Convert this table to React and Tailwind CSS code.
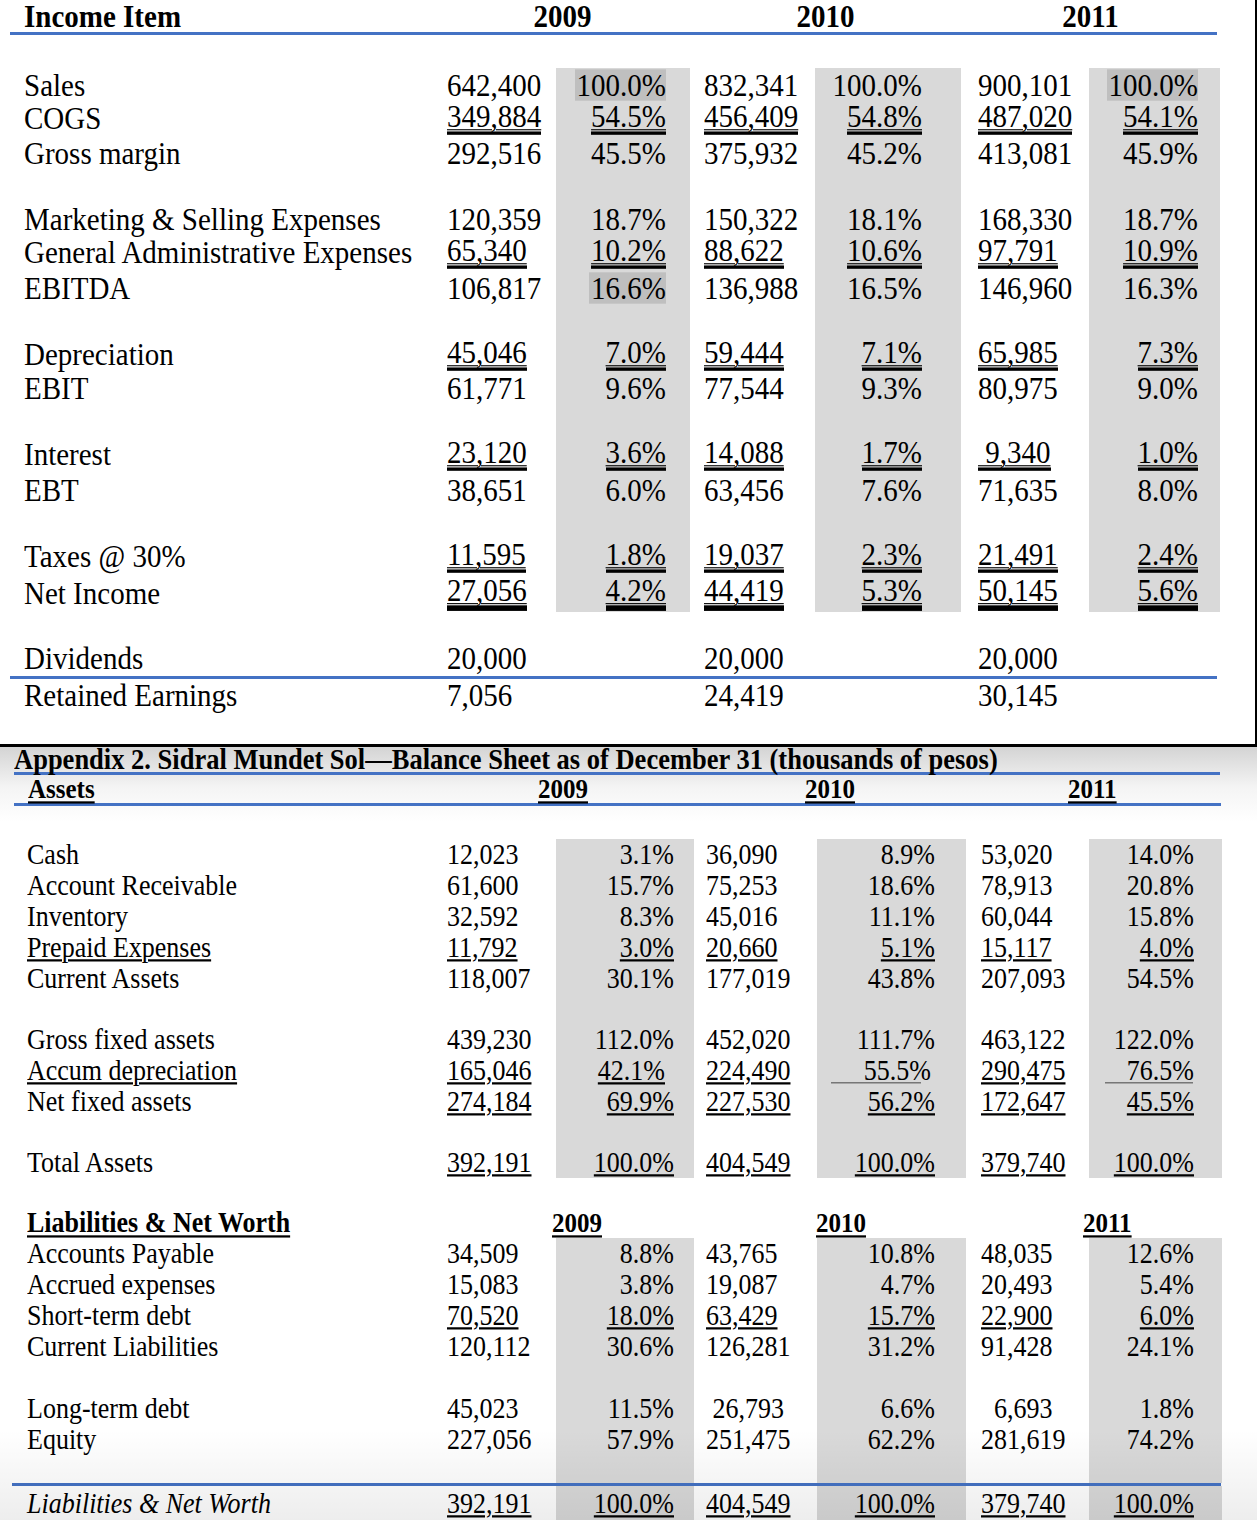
import React from "react";

const TG = "grid grid-cols-[447px_109px_134px_125px_146px_128px_131px_35px]";
const BG = "grid grid-cols-[447px_109px_138px_123px_149px_123px_133px_35px]";
const GRAY = "bg-[#d9d9d9]";
const SY = "inline-block scale-y-[1.12]";

const top = [
  { h: "h-[34px]", l: "Sales", c: ["642,400", { t: "100.0%", hl: 1 }, "832,341", "100.0%", "900,101", { t: "100.0%", hl: 1 }] },
  { h: "h-[32px]", l: "COGS", c: [{ t: "349,884", u: 1 }, { t: "54.5%", u: 1 }, { t: "456,409", u: 1 }, { t: "54.8%", u: 1 }, { t: "487,020", u: 1 }, { t: "54.1%", u: 1 }] },
  { h: "h-[38px]", l: "Gross margin", c: ["292,516", "45.5%", "375,932", "45.2%", "413,081", "45.9%"] },
  { h: "h-[30px]" },
  { h: "h-[34px]", l: "Marketing & Selling Expenses", c: ["120,359", "18.7%", "150,322", "18.1%", "168,330", "18.7%"] },
  { h: "h-[32px]", l: "General Administrative Expenses", c: [{ t: "65,340", u: 1 }, { t: "10.2%", u: 1 }, { t: "88,622", u: 1 }, { t: "10.6%", u: 1 }, { t: "97,791", u: 1 }, { t: "10.9%", u: 1 }] },
  { h: "h-[40px]", l: "EBITDA", c: ["106,817", { t: "16.6%", hl: 1 }, "136,988", "16.5%", "146,960", "16.3%"] },
  { h: "h-[28px]" },
  { h: "h-[36px]", l: "Depreciation", c: [{ t: "45,046", u: 1 }, { t: "7.0%", u: 1 }, { t: "59,444", u: 1 }, { t: "7.1%", u: 1 }, { t: "65,985", u: 1 }, { t: "7.3%", u: 1 }] },
  { h: "h-[32px]", l: "EBIT", c: ["61,771", "9.6%", "77,544", "9.3%", "80,975", "9.0%"] },
  { h: "h-[32px]" },
  { h: "h-[36px]", l: "Interest", c: [{ t: "23,120", u: 1 }, { t: "3.6%", u: 1 }, { t: "14,088", u: 1 }, { t: "1.7%", u: 1 }, { t: " 9,340", u: 1 }, { t: "1.0%", u: 1 }] },
  { h: "h-[36px]", l: "EBT", c: ["38,651", "6.0%", "63,456", "7.6%", "71,635", "8.0%"] },
  { h: "h-[30px]" },
  { h: "h-[36px]", l: "Taxes @ 30%", c: [{ t: "11,595", u: 1 }, { t: "1.8%", u: 1 }, { t: "19,037", u: 1 }, { t: "2.3%", u: 1 }, { t: "21,491", u: 1 }, { t: "2.4%", u: 1 }] },
  { h: "h-[38px]", l: "Net Income", c: [{ t: "27,056", u: 2 }, { t: "4.2%", u: 2 }, { t: "44,419", u: 2 }, { t: "5.3%", u: 2 }, { t: "50,145", u: 2 }, { t: "5.6%", u: 2 }] },
];

function TV({ v }) {
  if (v == null) return null;
  if (typeof v === "string") return <span className={`whitespace-pre ${SY}`}>{v}</span>;
  let cls = `whitespace-pre ${SY}`;
  if (v.u === 1) cls += " leading-[27px] underline decoration-1 underline-offset-[2px] border-b-[3px] border-black";
  if (v.u === 2) cls += " leading-[27px] underline decoration-1 underline-offset-[2px] border-b-[5px] border-black";
  if (v.hl) cls += " bg-[#bfbfbf] pl-[2px] leading-[28px]";
  return <span className={cls}>{v.t}</span>;
}

function TopRow({ r, gray = true }) {
  const c = r.c || [];
  const g = gray ? GRAY : "";
  return (
    <div className={`${TG} ${r.h} text-[29px] leading-[28px]`}>
      <div className="pl-[24px] flex items-center whitespace-pre"><span className={SY}>{r.l}</span></div>
      <div className="flex items-center"><TV v={c[0]} /></div>
      <div className={`flex items-center justify-end pr-[24px] ${g}`}><TV v={c[1]} /></div>
      <div className="flex items-center pl-[14px]"><TV v={c[2]} /></div>
      <div className={`flex items-center justify-end pr-[39px] ${g}`}><TV v={c[3]} /></div>
      <div className="flex items-center pl-[17px]"><TV v={c[4]} /></div>
      <div className={`flex items-center justify-end pr-[22px] ${g}`}><TV v={c[5]} /></div>
      <div />
    </div>
  );
}

const U = "underline decoration-[1.5px] underline-offset-[2px]";

function BV({ v }) {
  if (v == null) return null;
  if (typeof v === "string") return <span className={`whitespace-pre ${SY}`}>{v}</span>;
  if (v.line === 1)
    return (
      <span className={`relative whitespace-pre mr-[4px] ${SY}`}>
        {v.t}
        <span className="absolute left-[-33px] right-[10px] bottom-[2px] h-[1px] bg-[#555]" />
      </span>
    );
  if (v.line === 2)
    return (
      <span className={`relative whitespace-pre ${SY}`}>
        {v.t}
        <span className="absolute left-[-22px] right-[1px] bottom-[2px] h-[1px] bg-[#555]" />
      </span>
    );
  return <span className={`whitespace-pre ${SY} ${v.u ? U : ""} ${v.mr ? "mr-[9px]" : ""}`}>{v.t}</span>;
}

function BotRow({ r, gray = true }) {
  const c = r.c || [];
  const g = gray ? GRAY : "";
  return (
    <div className={`${BG} ${r.h || "h-[31px]"} text-[26px] leading-[27px]`}>
      <div className={`pl-[27px] flex items-center whitespace-pre ${r.it ? "italic" : ""}`}>
        <span className={`${SY} ${r.lu ? U : ""}`}>{r.l}</span>
      </div>
      <div className="flex items-center"><BV v={c[0]} /></div>
      <div className={`flex items-center justify-end pr-[20px] ${g}`}><BV v={c[1]} /></div>
      <div className="flex items-center pl-[12px]"><BV v={c[2]} /></div>
      <div className={`flex items-center justify-end pr-[31px] ${g}`}><BV v={c[3]} /></div>
      <div className="flex items-center pl-[15px]"><BV v={c[4]} /></div>
      <div className={`flex items-center justify-end pr-[28px] ${g}`}><BV v={c[5]} /></div>
      <div />
    </div>
  );
}

const assets1 = [
  { l: "Cash", c: ["12,023", "3.1%", "36,090", "8.9%", "53,020", "14.0%"] },
  { l: "Account Receivable", c: ["61,600", "15.7%", "75,253", "18.6%", "78,913", "20.8%"] },
  { l: "Inventory", c: ["32,592", "8.3%", "45,016", "11.1%", "60,044", "15.8%"] },
  { l: "Prepaid Expenses", lu: 1, c: [{ t: "11,792", u: 1 }, { t: "3.0%", u: 1 }, { t: "20,660", u: 1 }, { t: "5.1%", u: 1 }, { t: "15,117", u: 1 }, { t: "4.0%", u: 1 }] },
  { l: "Current Assets", c: ["118,007", "30.1%", "177,019", "43.8%", "207,093", "54.5%"] },
];
const assets2 = [
  { l: "Gross fixed assets", c: ["439,230", "112.0%", "452,020", "111.7%", "463,122", "122.0%"] },
  { l: "Accum depreciation", lu: 1, c: [{ t: "165,046", u: 1 }, { t: "42.1%", u: 1, mr: 1 }, { t: "224,490", u: 1 }, { t: "55.5%", line: 1 }, { t: "290,475", u: 1 }, { t: "76.5%", line: 2 }] },
  { l: "Net fixed assets", c: [{ t: "274,184", u: 1 }, { t: "69.9%", u: 1 }, { t: "227,530", u: 1 }, { t: "56.2%", u: 1 }, { t: "172,647", u: 1 }, { t: "45.5%", u: 1 }] },
];
const totalA = { l: "Total Assets", c: [{ t: "392,191", u: 1 }, { t: "100.0%", u: 1 }, { t: "404,549", u: 1 }, { t: "100.0%", u: 1 }, { t: "379,740", u: 1 }, { t: "100.0%", u: 1 }] };
const liab1 = [
  { l: "Accounts Payable", c: ["34,509", "8.8%", "43,765", "10.8%", "48,035", "12.6%"] },
  { l: "Accrued expenses", c: ["15,083", "3.8%", "19,087", "4.7%", "20,493", "5.4%"] },
  { l: "Short-term debt", c: [{ t: "70,520", u: 1 }, { t: "18.0%", u: 1 }, { t: "63,429", u: 1 }, { t: "15.7%", u: 1 }, { t: "22,900", u: 1 }, { t: "6.0%", u: 1 }] },
  { l: "Current Liabilities", c: ["120,112", "30.6%", "126,281", "31.2%", "91,428", "24.1%"] },
];
const liab2 = [
  { l: "Long-term debt", c: ["45,023", "11.5%", " 26,793", "6.6%", "  6,693", "1.8%"] },
  { l: "Equity", c: ["227,056", "57.9%", "251,475", "62.2%", "281,619", "74.2%"] },
];
const totalL = { h: "h-[34px]", l: "Liabilities & Net Worth", it: 1, c: [{ t: "392,191", u: 1 }, { t: "100.0%", u: 1 }, { t: "404,549", u: 1 }, { t: "100.0%", u: 1 }, { t: "379,740", u: 1 }, { t: "100.0%", u: 1 }] };

function Spacer({ h, grid = "b" }) {
  const cols = grid === "t" ? TG : BG;
  return (
    <div className={`${cols} ${h}`}>
      <div /><div /><div className={GRAY} /><div /><div className={GRAY} /><div /><div className={GRAY} /><div />
    </div>
  );
}

const HU = `${SY} underline decoration-2 underline-offset-[3px]`;

export default function App() {
  return (
    <div className="w-[1257px] h-[1520px] bg-white text-black font-['Liberation_Serif','Times_New_Roman',serif] overflow-hidden">
      {/* Income statement */}
      <div className="h-[744px] border-r-2 border-black">
        <div className="grid grid-cols-[447px_243px_271px_259px_35px] h-[32px] items-center text-[29px] font-bold leading-[28px]">
          <div className="pl-[24px]"><span className={SY}>Income Item</span></div>
          <div className="text-center pr-[12px]"><span className={SY}>2009</span></div>
          <div className="text-center"><span className={SY}>2010</span></div>
          <div className="text-center"><span className={SY}>2011</span></div>
          <div />
        </div>
        <div className="ml-[10px] w-[1207px] h-[3px] bg-[#4472c4]" />
        <div className="h-[33px]" />
        {top.map((r, i) => (r.l ? <TopRow key={i} r={r} /> : <Spacer key={i} h={r.h} grid="t" />))}
        <div className="h-[28px]" />
        <TopRow r={{ h: "h-[36px]", l: "Dividends", c: ["20,000", null, "20,000", null, "20,000", null] }} gray={false} />
        <div className="ml-[10px] w-[1207px] h-[3px] bg-[#4472c4]" />
        <TopRow r={{ h: "h-[32px]", l: "Retained Earnings", c: ["7,056", null, "24,419", null, "30,145", null] }} gray={false} />
      </div>
      <div className="h-[3px] bg-black" />

      {/* Balance sheet */}
      <div className="relative h-[773px] bg-[linear-gradient(to_bottom,#d4d4d4_0px,#f4f4f4_40px,#ffffff_75px)]">
        <div className="h-[25px] pl-[14px] text-[26.5px] font-bold leading-[24px] whitespace-nowrap">
          <span className={SY}>Appendix 2. Sidral Mundet Sol—Balance Sheet as of December 31 (thousands of pesos)</span>
        </div>
        <div className="ml-[14px] w-[1206px] h-[3px] bg-[#4472c4]" />
        <div className="grid grid-cols-[538px_267px_263px_1fr] h-[28px] items-center text-[25px] font-bold leading-[24px]">
          <div className="pl-[28px]"><span className={HU}>Assets</span></div>
          <div><span className={HU}>2009</span></div>
          <div><span className={HU}>2010</span></div>
          <div><span className={HU}>2011</span></div>
        </div>
        <div className="ml-[14px] w-[1207px] h-[3px] bg-[#4472c4]" />
        <div className="h-[33px]" />
        {assets1.map((r, i) => <BotRow key={i} r={r} />)}
        <Spacer h="h-[30px]" />
        {assets2.map((r, i) => <BotRow key={i} r={r} />)}
        <Spacer h="h-[30px]" />
        <BotRow r={totalA} />
        <div className="h-[29px]" />
        <div className="grid grid-cols-[552px_264px_267px_1fr] h-[31px] items-center text-[26px] font-bold leading-[26px]">
          <div className="pl-[27px]"><span className={HU}>Liabilities &amp; Net Worth</span></div>
          <div><span className={`${HU} text-[25px]`}>2009</span></div>
          <div><span className={`${HU} text-[25px]`}>2010</span></div>
          <div><span className={`${HU} text-[25px]`}>2011</span></div>
        </div>
        {liab1.map((r, i) => <BotRow key={i} r={r} />)}
        <Spacer h="h-[31px]" />
        {liab2.map((r, i) => <BotRow key={i} r={r} />)}
        <Spacer h="h-[28px]" />
        <div className="ml-[12px] w-[1209px] h-[3px] bg-[#4472c4]" />
        <BotRow r={totalL} />
        <div className="pointer-events-none absolute inset-x-0 bottom-0 h-[90px] bg-[linear-gradient(to_bottom,rgba(0,0,0,0)_0%,rgba(0,0,0,0.07)_100%)]" />
      </div>
    </div>
  );
}
